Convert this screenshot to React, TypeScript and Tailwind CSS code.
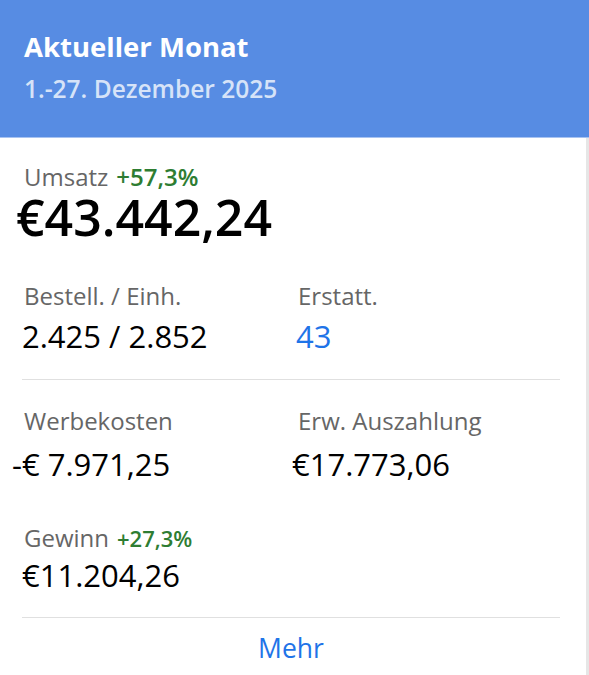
import React from 'react'

const Label: React.FC<{ children: React.ReactNode }> = ({ children }) => (
    <div className="text-[24px] leading-[33px] text-[#666666] pl-[2px]">{children}</div>
)

const Value: React.FC<{ children: React.ReactNode; className?: string }> = ({ children, className = 'text-black' }) => (
    <div className={`text-[31px] leading-[42px] whitespace-nowrap ${className}`}>{children}</div>
)

const App: React.FC = () => {
    return (
        <div className="w-[589px] h-[675px] bg-white font-['Open_Sans',sans-serif] flex flex-col">
            <div className="h-[138px] bg-[#578ce3] border-b border-[#a8c3f1] px-6 pt-[28px] shrink-0">
                <div className="text-[27.5px] leading-[37px] font-bold text-white whitespace-nowrap">Aktueller Monat</div>
                <div className="text-[24.5px] leading-[33px] font-semibold text-[#d6e3f8] mt-[7px] whitespace-nowrap">1.-27. Dezember 2025</div>
            </div>
            <div className="flex-1 border-r-[3px] border-[#e6e6e6] px-[22px] pt-[22px]">
                <div className="flex items-baseline gap-[8px]">
                    <Label>Umsatz</Label>
                    <span className="text-[24px] leading-[33px] font-semibold text-[#2e7d32]">+57,3%</span>
                </div>
                <div className="text-[50px] leading-[48px] font-semibold text-black -ml-[6px] whitespace-nowrap">€43.442,24</div>

                <div className="grid grid-cols-[274px_1fr] mt-[38px]">
                    <div>
                        <Label>Bestell. / Einh.</Label>
                        <Value className="text-black mt-[3px]">2.425 / 2.852</Value>
                    </div>
                    <div>
                        <Label>Erstatt.</Label>
                        <Value className="text-[#1f74e8] mt-[3px]">43</Value>
                    </div>
                </div>

                <div className="border-t border-[#e0e0e0] w-[538px] mt-[22px]" />

                <div className="grid grid-cols-[274px_1fr] mt-[24px]">
                    <div>
                        <Label>Werbekosten</Label>
                        <Value className="text-black -ml-[10px] mt-[6px]">-€ 7.971,25</Value>
                    </div>
                    <div>
                        <Label>Erw. Auszahlung</Label>
                        <Value className="text-black -ml-[4px] mt-[6px]">€17.773,06</Value>
                    </div>
                </div>

                <div className="mt-[36px]">
                    <div className="flex items-baseline gap-[8px]">
                        <Label>Gewinn</Label>
                        <span className="text-[22px] leading-[30px] font-semibold text-[#2e7d32]">+27,3%</span>
                    </div>
                    <Value>€11.204,26</Value>
                </div>

                <div className="border-t border-[#e0e0e0] w-[538px] mt-[21px]" />
                <div className="text-center text-[26.5px] leading-[36px] text-[#1f74e8] mt-[12px] w-[538px]">Mehr</div>
            </div>
        </div>
    )
}

export default App
